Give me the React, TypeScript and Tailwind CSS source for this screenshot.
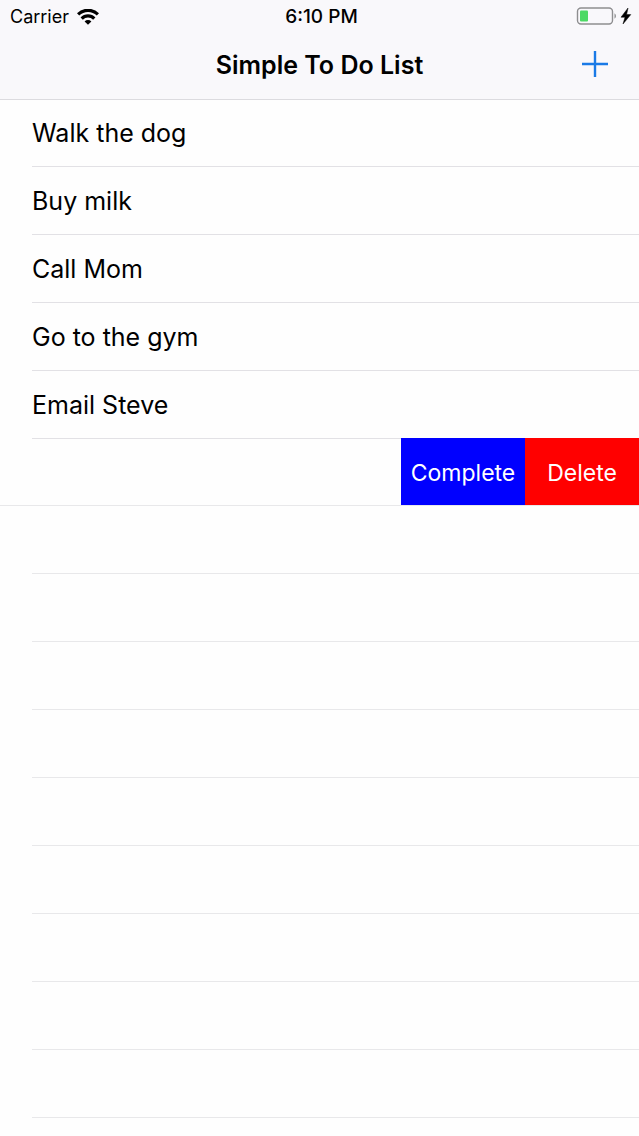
import { useState } from "react";

const INITIAL = ["Walk the dog", "Buy milk", "Call Mom", "Go to the gym", "Email Steve"];
const EMPTY_ROWS = 9;

function WifiIcon() {
  return (
    <svg width="22" height="16" viewBox="0 0 22 16" aria-hidden="true">
      <g fill="none" stroke="#000" strokeWidth="3.2">
        <path d="M1.1 5.4 A14 14 0 0 1 20.9 5.4" />
        <path d="M4.7 9.6 A8.8 8.8 0 0 1 17.3 9.6" />
      </g>
      <path d="M11 15.8 L7.6 12.4 A4.8 4.8 0 0 1 14.4 12.4 Z" fill="#000" />
    </svg>
  );
}

function BatteryIcon() {
  return (
    <svg width="56" height="18" viewBox="0 0 56 18" aria-hidden="true">
      <rect x="1.5" y="1" width="35" height="16" rx="3.5" fill="none" stroke="#8e8e90" strokeWidth="1.4" />
      <rect x="4" y="3.5" width="8" height="11" rx="1" fill="#4cd964" />
      <path d="M38.5 6.2 A3.4 3.4 0 0 1 38.5 11.8 Z" fill="#8e8e90" />
      <path d="M52 1 L45 10.2 H49 L47 17 L54.8 7.6 H50.6 Z" fill="#000" stroke="#000" strokeWidth="0.5" />
    </svg>
  );
}

function StatusBar() {
  return (
    <div className="grid h-8 grid-cols-[1fr_auto_1fr] items-center">
      <div className="flex items-center gap-2 pl-[10px] pt-0.5 text-lg">
        <span>Carrier</span>
        <WifiIcon />
      </div>
      <span className="pl-1 pt-0.5 text-[19px] font-medium">6:10 PM</span>
      <div className="flex justify-end pr-[7px]">
        <BatteryIcon />
      </div>
    </div>
  );
}

function NavBar({ onAdd }: { onAdd: () => void }) {
  return (
    <div className="grid flex-1 grid-cols-[1fr_auto_1fr] items-center">
      <h1 className="col-start-2 text-[25px] font-semibold">Simple To Do List</h1>
      <button type="button" aria-label="Add" onClick={onAdd} className="mr-[30px] cursor-pointer justify-self-end pb-1">
        <svg width="28" height="28" viewBox="0 0 28 28" aria-hidden="true">
          <path d="M14 1 V27 M1 14 H27" stroke="#1a7ae6" strokeWidth="2.4" />
        </svg>
      </button>
    </div>
  );
}

export default function App() {
  const [todos, setTodos] = useState(INITIAL);
  const [swiped, setSwiped] = useState(true);

  return (
    <div className="min-h-screen bg-[#fefefe] font-['Inter',sans-serif] text-black">
      <header className="flex h-[100px] flex-col border-b border-[#dcdbdf] bg-[#f9f8fb]">
        <StatusBar />
        <NavBar onAdd={() => setTodos([...todos, "New item"])} />
      </header>

      <ul>
        {todos.map((todo, i) => (
          <li key={i} className="ml-8 flex h-[68px] items-center border-b border-[#e2e1e5] pt-0.5 text-[25px] first:h-[67px]">
            {todo}
          </li>
        ))}
        {swiped && (
          <li className="flex h-[67px] justify-end border-b border-[#e8e8ea] text-[23px] text-white">
            <button
              type="button"
              onClick={() => setSwiped(false)}
              className="-mt-px w-[124px] cursor-pointer bg-[#0000ff] pt-1 text-center"
            >
              Complete
            </button>
            <button
              type="button"
              onClick={() => setSwiped(false)}
              className="-mt-px w-[114px] cursor-pointer bg-[#ff0000] pt-1 text-center"
            >
              Delete
            </button>
          </li>
        )}
      </ul>

      <div aria-hidden="true">
        {Array.from({ length: EMPTY_ROWS }, (_, i) => (
          <div key={i} className="ml-8 h-[68px] border-b border-[#e8e8ea]" />
        ))}
      </div>
    </div>
  );
}
